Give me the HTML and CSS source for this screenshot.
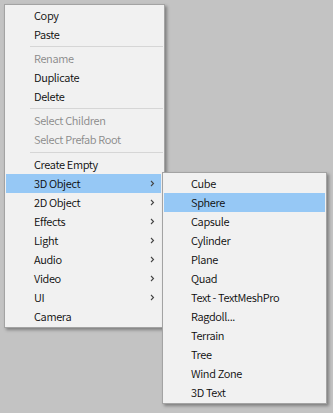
FILE: index.html
```html
<!DOCTYPE html>
<html>
<head>
<meta charset="utf-8">
<link rel="stylesheet" href="styles.css">
</head>
<body>
<div class="menu main">
  <div class="item">Copy</div>
  <div class="item">Paste</div>
  <div class="sep"></div>
  <div class="item disabled">Rename</div>
  <div class="item">Duplicate</div>
  <div class="item">Delete</div>
  <div class="sep"></div>
  <div class="item disabled">Select Children</div>
  <div class="item disabled">Select Prefab Root</div>
  <div class="sep sep6"></div>
  <div class="item">Create Empty</div>
  <div class="item sub active">3D Object
    <svg class="chev" width="5" height="7" viewBox="0 0 5 7"><polyline points="1,1 3.5,3.5 1,6" fill="none" stroke="#444" stroke-width="1.1"/></svg>
    <div class="menu submenu">
      <div class="item">Cube</div>
      <div class="item active">Sphere</div>
      <div class="item">Capsule</div>
      <div class="item">Cylinder</div>
      <div class="item">Plane</div>
      <div class="item">Quad</div>
      <div class="item">Text - TextMeshPro</div>
      <div class="item">Ragdoll...</div>
      <div class="item">Terrain</div>
      <div class="item">Tree</div>
      <div class="item">Wind Zone</div>
      <div class="item">3D Text</div>
    </div>
  </div>
  <div class="item sub">2D Object
    <svg class="chev" width="5" height="7" viewBox="0 0 5 7"><polyline points="1,1 3.5,3.5 1,6" fill="none" stroke="#444" stroke-width="1.1"/></svg>
  </div>
  <div class="item sub">Effects
    <svg class="chev" width="5" height="7" viewBox="0 0 5 7"><polyline points="1,1 3.5,3.5 1,6" fill="none" stroke="#444" stroke-width="1.1"/></svg>
  </div>
  <div class="item sub">Light
    <svg class="chev" width="5" height="7" viewBox="0 0 5 7"><polyline points="1,1 3.5,3.5 1,6" fill="none" stroke="#444" stroke-width="1.1"/></svg>
  </div>
  <div class="item sub">Audio
    <svg class="chev" width="5" height="7" viewBox="0 0 5 7"><polyline points="1,1 3.5,3.5 1,6" fill="none" stroke="#444" stroke-width="1.1"/></svg>
  </div>
  <div class="item sub">Video
    <svg class="chev" width="5" height="7" viewBox="0 0 5 7"><polyline points="1,1 3.5,3.5 1,6" fill="none" stroke="#444" stroke-width="1.1"/></svg>
  </div>
  <div class="item sub">UI
    <svg class="chev" width="5" height="7" viewBox="0 0 5 7"><polyline points="1,1 3.5,3.5 1,6" fill="none" stroke="#444" stroke-width="1.1"/></svg>
  </div>
  <div class="item">Camera</div>
</div>
</body>
</html>
```
FILE: styles.css
```css
html, body {
  margin: 0;
  height: 100%;
}
body {
  background: #c3c3c3;
  padding: 4px;
  box-sizing: border-box;
  font-family: "Noto Sans CJK KR", "Liberation Sans", sans-serif;
  font-size: 11px;
  font-weight: 350;
  letter-spacing: -0.35px;
  color: #0c0c0c;
}
.menu {
  background: #f1f1f1;
  border: 1px solid #a3a3a3;
  box-shadow: 2px 2px 3px rgba(0, 0, 0, 0.35);
  box-sizing: border-box;
}
.main {
  width: 161px;
  padding: 1px 3px 1px 1px;
}
.item {
  position: relative;
  height: 19px;
  line-height: 19px;
  padding-left: 28px;
  white-space: nowrap;
}
.item.disabled {
  color: #8a8a8a;
}
.item.active {
  background: #96c8f5;
}
.sep {
  height: 5px;
  display: flex;
  align-items: center;
  padding-left: 24px;
}
.sep6 {
  height: 6px;
}
.sep::before {
  content: "";
  display: block;
  height: 1px;
  flex: 1;
  background: #d6d6d6;
  margin-right: -2px;
}
.chev {
  position: absolute;
  right: 6px;
  top: 6px;
}
.submenu {
  position: absolute;
  left: calc(100% + 1px);
  top: -2px;
  width: 165px;
  padding: 1px;
}
.submenu .item {
  padding-left: 27px;
}
```
